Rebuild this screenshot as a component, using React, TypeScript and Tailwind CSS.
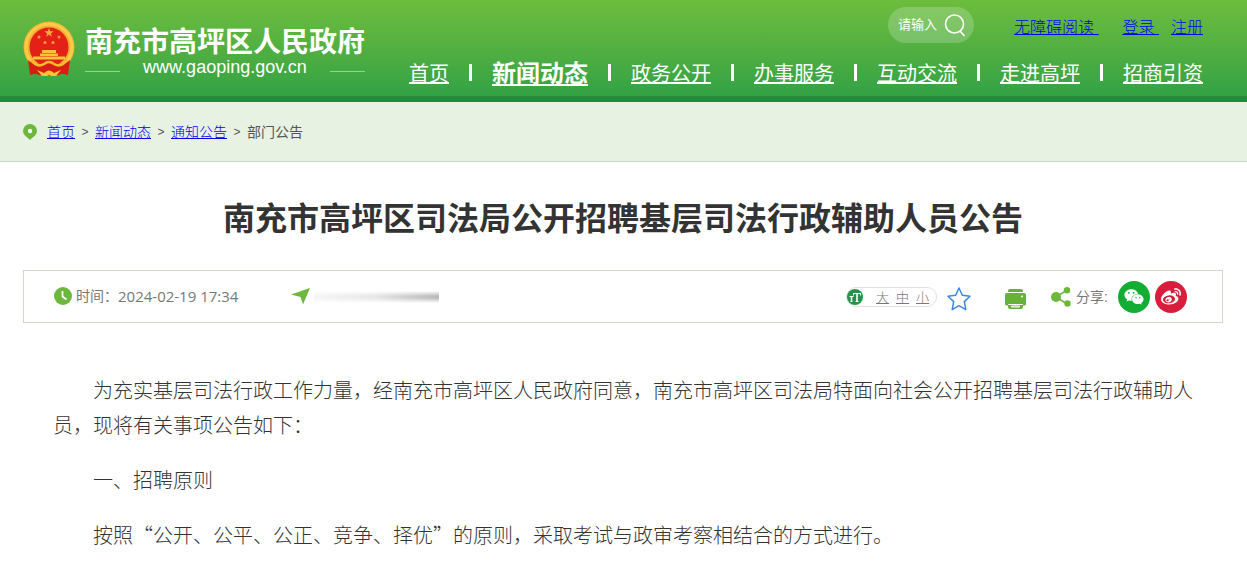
import React from "react";
import { FaWeixin, FaWeibo } from "react-icons/fa";

const navItems = ["首页", "新闻动态", "政务公开", "办事服务", "互动交流", "走进高坪", "招商引资"];

const crumbs = ["首页", "新闻动态", "通知公告"];

const Emblem = () => (
    <svg width="52" height="56" viewBox="0 0 52 56" aria-hidden="true">
        <path d="M7 36 L8 54 Q13 51 18 54 H34 Q39 51 44 54 L45 36 Z" fill="#d81e12" />
        <circle cx="26" cy="26" r="25.5" fill="#f6b032" />
        <circle cx="26" cy="26" r="23" fill="none" stroke="#fdca4a" strokeWidth="3" />
        <circle cx="26" cy="26" r="19.5" fill="#e32117" />
        <path d="M26 7l1.200 3.300h3.400l-2.700 2.100 1 3.400-2.900-2-2.900 2 1-3.400-2.700-2.100h3.400z" fill="#fba63a" />
        <g fill="#fb9a3a">
            <circle cx="16" cy="16" r="1.500" />
            <circle cx="36" cy="16" r="1.500" />
            <circle cx="22" cy="21.500" r="1.500" />
            <circle cx="30" cy="21.500" r="1.500" />
        </g>
        <path d="M19 29h14v3h-14zM17 32.500h18v2.500H17zM10 35.500h32v3H10z" fill="#fdc23c" />
        <path d="M5 39 Q13 46 26 40 Q39 46 47 39 L45 54 Q40 51 36 54 H16 Q12 51 7 54 Z" fill="#d81e12" />
        <path d="M8 39 Q14 47 21 43 Q26 39 31 43 Q38 47 44 39" fill="none" stroke="#fbb92f" strokeWidth="2.500" />
        <path d="M14 49l7 3q5-5 10 0l7-3-5 6h-5l-2-1.500-2 1.500h-5z" fill="#ffc53a" />
    </svg>
);

const Header = () => (
    <header className="border-b-6 border-[#268a3a] bg-linear-to-b from-[#6dbd3d] to-[#31a244]">
        <div className="mr-6 ml-[23px] flex h-24 justify-between">
            <a href="#" className="flex gap-2.5 pt-[21px] text-white">
                <Emblem />
                <div className="pt-1">
                    <div className="text-[28px] leading-9 font-bold">南充市高坪区人民政府</div>
                    <div className="-mt-1 flex items-center justify-between">
                        <span className="mt-2 h-px w-[35px] bg-[#8fd68a]"></span>
                        <span className="text-lg leading-5">www.gaoping.gov.cn</span>
                        <span className="mt-2 h-px w-[35px] bg-[#8fd68a]"></span>
                    </div>
                </div>
            </a>

            <div className="flex flex-col items-end pt-[7px] pr-5">
                <div className="flex h-9 items-center">
                    <form className="mr-10 flex h-9 w-[86px] items-center rounded-full bg-white/20 pr-2 pl-2.5">
                        <input
                            type="text"
                            aria-label="搜索"
                            placeholder="请输入"
                            className="w-12 min-w-0 text-[13px] text-white outline-none placeholder:text-white"
                        />
                        <button type="button" aria-label="搜索">
                            <svg width="22" height="24" viewBox="0 0 22 24" fill="none" stroke="#fff" strokeWidth="1.600">
                                <circle cx="10.500" cy="11" r="9" />
                                <path d="M16 18l4.500 5" />
                            </svg>
                        </button>
                    </form>
                    <div className="flex pt-1.5 text-base font-light whitespace-pre text-[#0000ee] underline">
                        <a href="#" className="mr-6">{"无障碍阅读 "}</a>
                        <a href="#" className="mr-3">{"登录 "}</a>
                        <a href="#">注册</a>
                    </div>
                </div>

                <nav className="mt-[13px] flex h-9 items-center gap-5 text-xl text-white">
                    {navItems.map((item, idx) => (
                        <React.Fragment key={item}>
                            {idx > 0 && <span className="mb-1 h-[17px] w-[3px] bg-white"></span>}
                            <a href="#" className={idx === 1 ? "text-2xl font-bold underline" : "underline"}>
                                {item}
                            </a>
                        </React.Fragment>
                    ))}
                </nav>
            </div>
        </div>
    </header>
);

const Breadcrumb = () => (
    <div className="border-b border-[#c9dccb] bg-[#e7f2e2]">
        <div className="mr-6 ml-[23px] flex h-[59px] items-center text-sm text-[#555]">
            <svg width="14" height="16" viewBox="0 0 14 16" className="mr-2.5" aria-hidden="true">
                <path d="M7 0a7 7 0 0 1 7 7c0 4-4.500 6.500-7 9-2.500-2.500-7-5-7-9a7 7 0 0 1 7-7z" fill="#6db83c" />
                <circle cx="7" cy="7" r="2.200" fill="#fff" />
            </svg>
            {crumbs.map((name) => (
                <React.Fragment key={name}>
                    <a href="#" className="font-light text-[#0000ee] underline">{name}</a>
                    <span className="w-5 text-center text-xs">&gt;</span>
                </React.Fragment>
            ))}
            <span>部门公告</span>
        </div>
    </div>
);

const MetaBar = () => (
    <div className="flex h-[53px] items-center justify-between border border-[#d5d5c8] pr-[35px] pl-[30px] text-sm text-[#777]">
        <div className="flex items-center">
            <svg width="18" height="18" viewBox="0 0 18 18" className="mr-1" aria-hidden="true">
                <circle cx="9" cy="9" r="9" fill="#6db83c" />
                <path d="M8.500 4v5.500l4 3" fill="none" stroke="#fff" strokeWidth="1.800" />
            </svg>
            <span>时间：</span>
            <span className="font-['Open_Sans',sans-serif] text-[15px]">2024-02-19 17:34</span>
            <svg width="19" height="17" viewBox="0 0 19 17" className="mr-1 ml-[53px]" aria-hidden="true">
                <path d="M0 6.500L19 0l-7 16.500-2.500-7.500z" fill="#6db83c" />
            </svg>
            {/* publisher, blanked out */}
            <span className="mt-0.5 h-3 w-[125px] bg-linear-to-r from-[#f2f2f2] via-[#dcdcdc] to-[#999] mask-y-from-40% mask-y-to-100%"></span>
        </div>

        <div className="flex items-center">
            <div className="flex h-5 items-center gap-[7px] rounded-full border border-[#e2e2e2] pr-[7px] text-[13px] font-light underline">
                <svg width="16" height="16" viewBox="0 0 16 16" className="mr-1.5" aria-hidden="true">
                    <circle cx="8" cy="8" r="8" fill="#23944a" />
                    <path d="M6 4.500h8M6.500 4v2.500M13.500 4v2.500M8.500 12.500h3M2.500 7.500h4M3.500 12.500h2" stroke="#fff" />
                    <path d="M10 4.500v8M4.500 7.500v5" stroke="#fff" strokeWidth="1.600" />
                </svg>
                <a href="#" className="pt-1">大</a>
                <a href="#" className="pt-1">中</a>
                <a href="#" className="pt-1">小</a>
            </div>
            <button type="button" aria-label="收藏" className="mt-1 ml-2.5">
                <svg width="24" height="24" viewBox="0 0 24 24" fill="none" stroke="#3f86d8" strokeWidth="1.500" strokeLinejoin="round">
                    <path d="M12 1l3.300 7.300 7.700 1-5.700 5.300 1.500 8L12 18.700 5.200 22.600l1.500-8L1 9.300l7.700-1z" />
                </svg>
            </button>
            <button type="button" aria-label="打印" className="mt-1 ml-[34px]">
                <svg width="21" height="20" viewBox="0 0 21 20" fill="#66b236">
                    <path d="M5 0h11a2 2 0 0 1 2 2v1H3V2a2 2 0 0 1 2-2z" />
                    <path d="M2 4h17a2 2 0 0 1 2 2v9a1.500 1.500 0 0 1-1.500 1.500H18V18a2 2 0 0 1-2 2H5a2 2 0 0 1-2-2v-1.500H1.500A1.500 1.500 0 0 1 0 15V6a2 2 0 0 1 2-2z" />
                    <circle cx="17" cy="7.500" r="1" fill="#fff" />
                    <path d="M3.500 16v-.5h14v.5M6.500 18v-1h8v1z" fill="none" stroke="#fff" />
                </svg>
            </button>
            <svg width="20" height="20" viewBox="0 0 20 20" className="mr-[5px] ml-[25px]" fill="#6db83c" aria-hidden="true">
                <path d="M16 3L5 10l11 7" fill="none" stroke="#6db83c" strokeWidth="1.500" />
                <circle cx="5" cy="10" r="5" />
                <circle cx="16" cy="3.200" r="3.200" />
                <circle cx="16.500" cy="16.500" r="3.200" />
            </svg>
            <span>分享:</span>
            <button type="button" aria-label="微信" className="ml-2.5 flex size-8 items-center justify-center rounded-full bg-[#13ad35] text-white">
                <FaWeixin size={20} />
            </button>
            <button type="button" aria-label="微博" className="ml-[5px] flex size-8 items-center justify-center rounded-full bg-[#d81e3c] text-white">
                <FaWeibo size={20} />
            </button>
        </div>
    </div>
);

const App = () => {
    return (
        <div className="min-h-screen bg-white font-['Liberation_Sans','Noto_Sans_CJK_SC',sans-serif]" lang="zh-CN">
            <Header />
            <Breadcrumb />
            <main className="mr-6 ml-[23px]">
                <h1 className="pt-[33px] pb-[27px] text-center text-[32px] leading-12 font-bold text-[#333]">
                    南充市高坪区司法局公开招聘基层司法行政辅助人员公告
                </h1>
                <MetaBar />
                <article className="flex flex-col gap-5 px-[30px] pt-[49px] indent-10 font-['Noto_Sans_CJK_SC',sans-serif] text-xl leading-[35px] font-light text-[#333]">
                    <p>
                        为充实基层司法行政工作力量，经南充市高坪区人民政府同意，南充市高坪区司法局特面向社会公开招聘基层司法行政辅助人员，现将有关事项公告如下：
                    </p>
                    <p>一、招聘原则</p>
                    <p>按照“公开、公平、公正、竞争、择优”的原则，采取考试与政审考察相结合的方式进行。</p>
                </article>
            </main>
        </div>
    );
};

export default App;
